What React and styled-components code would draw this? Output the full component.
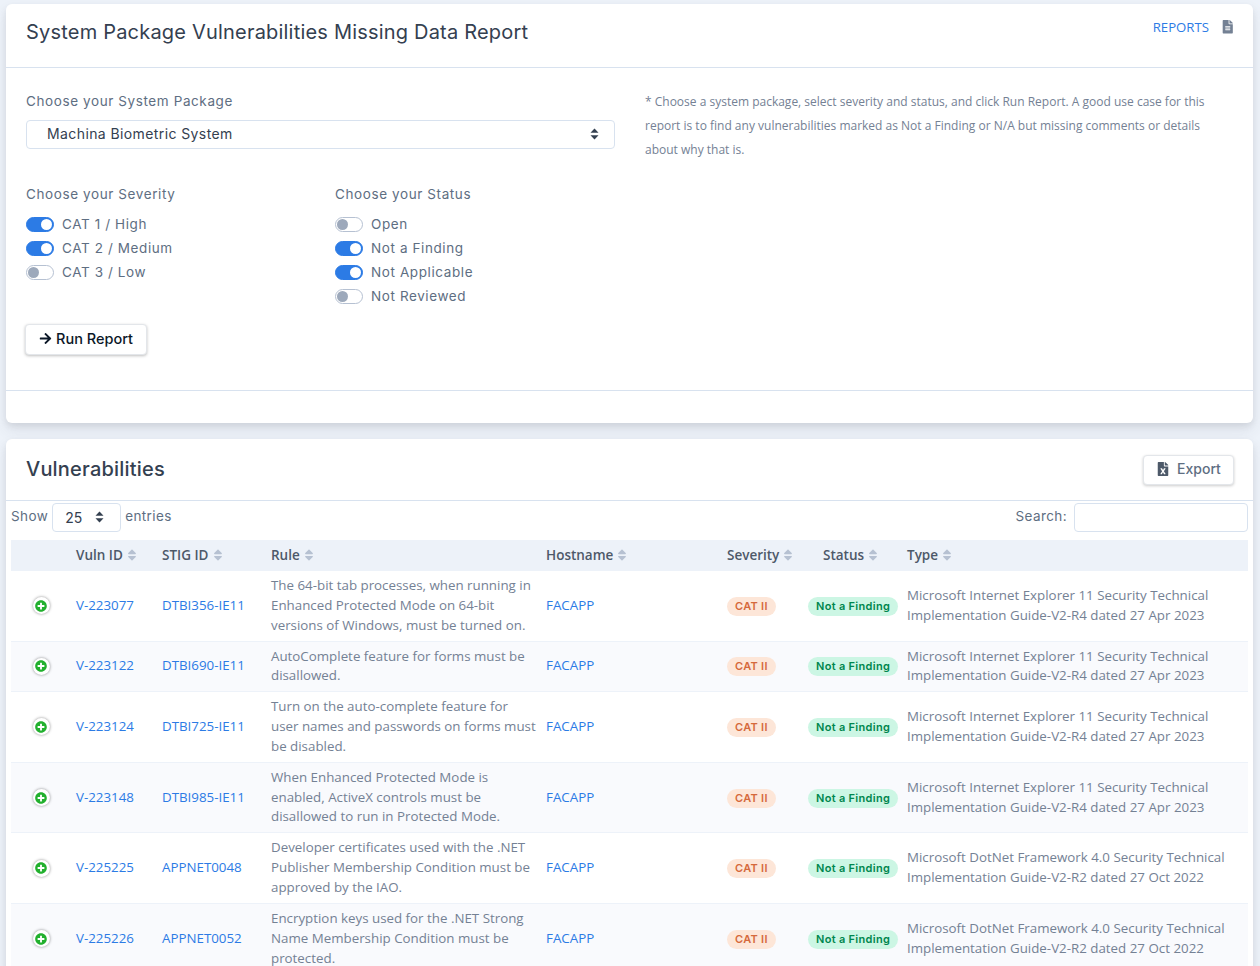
import React from 'react';
import styled, { createGlobalStyle } from 'styled-components';
import { FaArrowRight, FaFileAlt, FaFileExcel, FaPlusCircle, FaSort } from 'react-icons/fa';

const heading = `Inter, "Open Sans", sans-serif`;
const body = `"Open Sans", "Noto Sans", sans-serif`;

const GlobalStyle = createGlobalStyle`
    html, body {
        margin: 0;
        overflow: hidden;
        background: #edf2f9;
    }
    body {
        font-family: ${body};
        color: #5e6e82;
    }
`

const Page = styled.div`
    padding: 4px 7px 0 6px;
    display: flex;
    flex-direction: column;
    gap: 16px;
`

const Card = styled.section`
    background: #fff;
    border-radius: 6px;
    box-shadow: 0 7px 14px rgba(65, 69, 88, 0.1), 0 3px 6px rgba(0, 0, 0, 0.07);
`

const ReportHeader = styled.header`
    height: 64px;
    box-sizing: border-box;
    padding: 0 18.5px 0 20px;
    display: flex;
    justify-content: space-between;
    border-bottom: 1px solid #d8e2ef;
`

const ReportTitle = styled.h1`
    margin: 15px 0 0;
    font-family: ${heading};
    font-size: 20px;
    line-height: 26px;
    font-weight: 400;
    letter-spacing: 0.2px;
    color: #344050;
`

const ReportsLink = styled.a`
    margin-top: 14px;
    height: 18px;
    display: flex;
    align-items: center;
    gap: 12px;
    font-size: 13.2px;
    color: #2c7be5;
    svg {
        color: #748194;
        font-size: 13.5px;
    }
`

const ReportBody = styled.div`
    height: 323px;
    box-sizing: border-box;
    padding: 23px 20px 0;
    display: grid;
    grid-template-columns: 589px 1fr;
    column-gap: 30px;
    border-bottom: 1px solid #d8e2ef;
`

const CardFoot = styled.div`
    height: 32px;
`

const FieldLabel = styled.div`
    font-family: ${heading};
    font-size: 13.5px;
    line-height: 20px;
    letter-spacing: 0.6px;
    color: #5e6e82;
`

const PackageSelect = styled.div`
    margin-top: 9px;
    height: 29px;
    box-sizing: border-box;
    padding: 0 15px 2px 20px;
    display: flex;
    align-items: center;
    justify-content: space-between;
    border: 1px solid #d8e2ef;
    border-radius: 4px;
    font-family: ${heading};
    font-size: 14px;
    letter-spacing: 0.4px;
    color: #344050;
`

const Filters = styled.div`
    margin-top: 35px;
    display: grid;
    grid-template-columns: 309px 1fr;
`

const ToggleList = styled.div`
    margin-top: 8px;
    display: flex;
    flex-direction: column;
`

const ToggleRow = styled.label`
    height: 24px;
    display: flex;
    align-items: center;
    gap: 8px;
    font-family: ${heading};
    font-size: 13.5px;
    letter-spacing: 0.6px;
    color: #5e6e82;
`

const Track = styled.span`
    width: 28px;
    height: 15px;
    box-sizing: border-box;
    padding: 2px;
    display: flex;
    justify-content: ${props => props.$on ? 'flex-end' : 'flex-start'};
    border-radius: 8px;
    background: ${props => props.$on ? '#2c7be5' : '#fff'};
    border: 1px solid ${props => props.$on ? '#2c7be5' : '#b6c1d2'};
    &::after {
        content: '';
        width: 11px;
        height: 11px;
        margin: -1px;
        border-radius: 50%;
        background: ${props => props.$on ? '#fff' : '#9da9bb'};
    }
`

const RunButton = styled.button`
    margin: 16px 0 0 -1px;
    width: 122px;
    height: 31px;
    padding: 0 0 2px;
    display: flex;
    align-items: center;
    justify-content: center;
    gap: 4px;
    background: #fff;
    border: 1px solid #e3e6ea;
    border-radius: 4px;
    box-shadow: 0 1px 3px rgba(0, 0, 0, 0.25);
    font-family: ${heading};
    font-size: 14.5px;
    font-weight: 500;
    color: #0b1727;
    svg {
        font-size: 13px;
    }
`

const HelpText = styled.p`
    margin: -1px 0 0;
    font-size: 12px;
    line-height: 24px;
    color: #748194;
`

const TableHeader = styled.header`
    height: 62px;
    box-sizing: border-box;
    padding: 16px 19px 0 20px;
    display: flex;
    justify-content: space-between;
    border-bottom: 1px solid #d8e2ef;
`

const TableTitle = styled.h2`
    margin: -1px 0 0;
    font-family: ${heading};
    font-size: 20px;
    line-height: 30px;
    font-weight: 500;
    letter-spacing: 0.2px;
    color: #344050;
`

const ExportButton = styled.button`
    width: 91px;
    height: 30px;
    padding: 0 0 3px;
    display: flex;
    align-items: center;
    justify-content: center;
    gap: 7px;
    background: #fff;
    border: 1px solid #e3e6ea;
    border-radius: 4px;
    box-shadow: 0 1px 3px rgba(0, 0, 0, 0.2);
    font-family: ${heading};
    font-size: 14px;
    font-weight: 500;
    color: #5e6e82;
    svg {
        color: #4d5969;
        font-size: 14px;
    }
`

const TableControls = styled.div`
    padding: 2px 5px 0;
    height: 39px;
    box-sizing: border-box;
    display: flex;
    justify-content: space-between;
    font-family: ${heading};
    font-size: 13.5px;
    letter-spacing: 0.4px;
`

const ControlGroup = styled.div`
    height: 29px;
    display: flex;
    align-items: center;
    gap: ${props => props.$gap || 4}px;
    line-height: 27px;
`

const EntriesSelect = styled.div`
    width: 69px;
    height: 29px;
    box-sizing: border-box;
    padding: 0 16px 1px 12px;
    display: flex;
    align-items: center;
    justify-content: space-between;
    border: 1px solid #d8e2ef;
    border-radius: 4px;
    font-size: 14px;
    letter-spacing: 0;
    color: #344050;
`

const SearchInput = styled.div`
    width: 174px;
    height: 29px;
    box-sizing: border-box;
    border: 1px solid #d8e2ef;
    border-radius: 4px;
`

const ControlText = styled.span`
    margin-top: -2px;
`

const Table = styled.table`
    margin: 0 5px;
    width: 1237px;
    table-layout: fixed;
    border-collapse: collapse;
    font-size: 13.33px;
    line-height: 19.85px;
`

const HeadRow = styled.tr`
    height: 31px;
    background: #edf2f9;
`

const HeadCell = styled.th`
    box-sizing: border-box;
    padding: 0 6px;
    width: ${props => props.$width}px;
    text-align: ${props => props.$center ? 'center' : 'left'};
    font-size: 13.5px;
    font-weight: 600;
    color: #4d5969;
    white-space: nowrap;
    svg {
        margin-left: 2px;
        vertical-align: -2px;
        font-size: 14px;
        color: #b6c1d2;
    }
`

const Row = styled.tr`
    background: ${props => props.$striped ? '#f9fafd' : '#fff'};
    border-bottom: 1px solid #edf2f9;
`

const Cell = styled.td`
    padding: 5px 2px 5px 6px;
    color: #748194;
`

const Link = styled.a`
    color: #2c7be5;
`

const ExpandIcon = styled.span`
    width: 17px;
    height: 17px;
    margin-left: 15.5px;
    display: flex;
    align-items: center;
    justify-content: center;
    border-radius: 50%;
    background: #fff;
    box-shadow: 0 0 3px rgba(0, 0, 0, 0.45);
    color: #22b02e;
    font-size: 12px;
`

const Badge = styled.span`
    display: inline-block;
    padding: 0 8px;
    border-radius: 10px;
    font-family: ${heading};
    font-size: 11px;
    line-height: 19px;
    font-weight: 600;
    letter-spacing: 0.3px;
    white-space: nowrap;
    background: ${props => props.$bg};
    color: ${props => props.$color};
`

const SelectArrows = () => (
    <svg width="9" height="12" viewBox="0 0 9 12" fill="#344050">
        <path d="M4.5 0.5 8.5 4.8H0.5Z" />
        <path d="M4.5 11.5 0.5 7.2H8.5Z" />
    </svg>
);

const IE = 'Microsoft Internet Explorer 11 Security Technical Implementation Guide-V2-R4 dated 27 Apr 2023';
const NET = 'Microsoft DotNet Framework 4.0 Security Technical Implementation Guide-V2-R2 dated 27 Oct 2022';

const vulns = [
    ['V-223077', 'DTBI356-IE11', 'The 64-bit tab processes, when running in Enhanced Protected Mode on 64-bit versions of Windows, must be turned on.', IE],
    ['V-223122', 'DTBI690-IE11', 'AutoComplete feature for forms must be disallowed.', IE],
    ['V-223124', 'DTBI725-IE11', 'Turn on the auto-complete feature for user names and passwords on forms must be disabled.', IE],
    ['V-223148', 'DTBI985-IE11', 'When Enhanced Protected Mode is enabled, ActiveX controls must be disallowed to run in Protected Mode.', IE],
    ['V-225225', 'APPNET0048', 'Developer certificates used with the .NET Publisher Membership Condition must be approved by the IAO.', NET],
    ['V-225226', 'APPNET0052', 'Encryption keys used for the .NET Strong Name Membership Condition must be protected.', NET],
];

const severities = [['CAT 1 / High', true], ['CAT 2 / Medium', true], ['CAT 3 / Low', false]];
const statuses = [['Open', false], ['Not a Finding', true], ['Not Applicable', true], ['Not Reviewed', false]];
const columns = [['Vuln ID', 86], ['STIG ID', 109], ['Rule', 275], ['Hostname', 181], ['Severity', 81], ['Status', 99, true], ['Type', 347]];

function Toggles({ items }) {
    return (
        <ToggleList>
            {items.map(([label, on]) => (
                <ToggleRow key={label}><Track $on={on} />{label}</ToggleRow>
            ))}
        </ToggleList>
    );
}

export default function App() {
    return (
        <Page>
            <GlobalStyle />
            <Card>
                <ReportHeader>
                    <ReportTitle>System Package Vulnerabilities Missing Data Report</ReportTitle>
                    <ReportsLink>REPORTS <FaFileAlt /></ReportsLink>
                </ReportHeader>
                <ReportBody>
                    <div>
                        <FieldLabel>Choose your System Package</FieldLabel>
                        <PackageSelect>Machina Biometric System <SelectArrows /></PackageSelect>
                        <Filters>
                            <div>
                                <FieldLabel>Choose your Severity</FieldLabel>
                                <Toggles items={severities} />
                            </div>
                            <div>
                                <FieldLabel>Choose your Status</FieldLabel>
                                <Toggles items={statuses} />
                            </div>
                        </Filters>
                        <RunButton><FaArrowRight /> Run Report</RunButton>
                    </div>
                    <HelpText>* Choose a system package, select severity and status, and click Run Report. A good use case for this report is to find any vulnerabilities marked as Not a Finding or N/A but missing comments or details about why that is.</HelpText>
                </ReportBody>
                <CardFoot />
            </Card>
            <Card>
                <TableHeader>
                    <TableTitle>Vulnerabilities</TableTitle>
                    <ExportButton><FaFileExcel /> Export</ExportButton>
                </TableHeader>
                <TableControls>
                    <ControlGroup>
                        <ControlText>Show</ControlText>
                        <EntriesSelect>25 <SelectArrows /></EntriesSelect>
                        <ControlText>entries</ControlText>
                    </ControlGroup>
                    <ControlGroup $gap={7}>
                        <ControlText>Search:</ControlText>
                        <SearchInput />
                    </ControlGroup>
                </TableControls>
                <Table>
                    <thead>
                        <HeadRow>
                            <HeadCell $width={59} />
                            {columns.map(([name, width, center]) => (
                                <HeadCell key={name} $width={width} $center={center}>{name}<FaSort /></HeadCell>
                            ))}
                        </HeadRow>
                    </thead>
                    <tbody>
                        {vulns.map(([id, stig, rule, type], i) => (
                            <Row key={id} $striped={i % 2 === 1}>
                                <Cell><ExpandIcon><FaPlusCircle /></ExpandIcon></Cell>
                                <Cell><Link>{id}</Link></Cell>
                                <Cell><Link>{stig}</Link></Cell>
                                <Cell>{rule}</Cell>
                                <Cell><Link>FACAPP</Link></Cell>
                                <Cell><Badge $bg="#fde6d8" $color="#d5693c">CAT II</Badge></Cell>
                                <Cell><Badge $bg="#ccf6e4" $color="#00864e">Not a Finding</Badge></Cell>
                                <Cell>{type}</Cell>
                            </Row>
                        ))}
                    </tbody>
                </Table>
            </Card>
        </Page>
    );
}
